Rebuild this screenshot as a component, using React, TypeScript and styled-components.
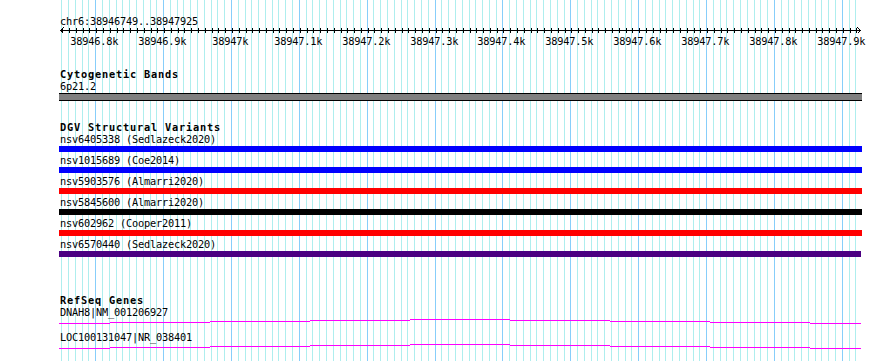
import styled, { createGlobalStyle } from "styled-components";

const START = 38946749;
const END = 38947925;
const ORIGIN_BP = 38946800;
const ORIGIN_X = 95.7;
const PX_PER_BP = 0.67875;
const VIEW_LEFT = 59;
const VIEW_WIDTH = 803;

const toX = (bp: number) =>
  Math.floor(ORIGIN_X + (bp - ORIGIN_BP) * PX_PER_BP) - VIEW_LEFT;

const gridBps: number[] = [];
for (let bp = 38946750; bp <= 38947920; bp += 10) gridBps.push(bp);

const majorBps = gridBps.filter(bp => bp % 100 === 0);

const formatTick = (bp: number) =>
  `${(bp / 1000).toFixed(bp % 1000 === 0 ? 0 : 1)}k`;

const variants = [
  { name: "nsv6405338", study: "Sedlazeck2020", color: "#0000ff", end: 803 },
  { name: "nsv1015689", study: "Coe2014", color: "#0000ff", end: 803 },
  { name: "nsv5903576", study: "Almarri2020", color: "#ff0000", end: 803 },
  { name: "nsv5845600", study: "Almarri2020", color: "#000000", end: 803 },
  { name: "nsv602962", study: "Cooper2011", color: "#ff0000", end: 803 },
  { name: "nsv6570440", study: "Sedlazeck2020", color: "#4b0082", end: 802 },
];

const genes = ["DNAH8|NM_001206927", "LOC100131047|NR_038401"];

// wavy step profile of the gene line, in view coords
const geneSteps = [
  { x1: 0, x2: 51, y: 5 },
  { x1: 51, x2: 151, y: 4 },
  { x1: 151, x2: 251, y: 3 },
  { x1: 251, x2: 351, y: 2 },
  { x1: 351, x2: 451, y: 1 },
  { x1: 451, x2: 551, y: 2 },
  { x1: 551, x2: 651, y: 3 },
  { x1: 651, x2: 751, y: 4 },
  { x1: 751, x2: 802, y: 5 },
];

const GlobalStyle = createGlobalStyle`
  html, body {
    margin: 0;
    padding: 0;
    background: #ffffff;
  }
  body {
    font-family: "DejaVu Sans Mono", "Liberation Mono", monospace;
    color: #000000;
  }
`;

export default function App() {
  return (
    <>
      <GlobalStyle />
      <View>
        <Grid width={VIEW_WIDTH} height={361}>
          {gridBps.map(bp => (
            <rect
              key={bp}
              x={toX(bp)}
              y={0}
              width={1}
              height={361}
              fill={bp % 100 === 0 ? "#87cefa" : "#aeeeee"}
            />
          ))}
        </Grid>

        <Content>
          <RulerLabel>
            chr6:{START}..{END}
          </RulerLabel>
          <Axis width={VIEW_WIDTH} height={8}>
            <rect x={1} y={3} width={800} height={1} fill="#000" />
            {gridBps.map(bp => (
              <rect key={bp} x={toX(bp) + 1} y={1} width={1} height={5} fill="#000" />
            ))}
            <polyline points="4.5,0.5 1.5,3.5 4.5,6.5" fill="none" stroke="#000" />
            <polyline points="798.5,0.5 801.5,3.5 798.5,6.5" fill="none" stroke="#000" />
          </Axis>
          <TickRow>
            {majorBps.map(bp => (
              <TickLabel key={bp} style={{ left: toX(bp) - 0.8 }}>
                {formatTick(bp)}
              </TickLabel>
            ))}
          </TickRow>

          <TrackTitle $top={21}>Cytogenetic Bands</TrackTitle>
          <FeatureLabel>6p21.2</FeatureLabel>
          <Band />

          <TrackTitle $top={20}>DGV Structural Variants</TrackTitle>
          {variants.map(v => (
            <VariantRow key={v.name}>
              <FeatureLabel>
                {v.name} ({v.study})
              </FeatureLabel>
              <Bar $color={v.color} $width={v.end} />
            </VariantRow>
          ))}

          <TrackTitle $top={35}>RefSeq Genes</TrackTitle>
          {genes.map(g => (
            <GeneRow key={g}>
              <FeatureLabel>{g}</FeatureLabel>
              <GeneLine width={VIEW_WIDTH} height={13}>
                {geneSteps.map(s => (
                  <rect
                    key={s.x1}
                    x={s.x1}
                    y={s.y}
                    width={s.x2 - s.x1}
                    height={1}
                    fill="#ff00ff"
                  />
                ))}
              </GeneLine>
            </GeneRow>
          ))}
        </Content>
      </View>
    </>
  );
}

const View = styled.div`
  position: relative;
  margin-left: ${VIEW_LEFT}px;
  width: ${VIEW_WIDTH}px;
  height: 361px;
`;

const Grid = styled.svg`
  position: absolute;
  left: 0;
  top: 0;
  shape-rendering: crispEdges;
`;

const Content = styled.div`
  position: relative;
  display: flex;
  flex-direction: column;
`;

const Text = styled.div`
  font-size: 10.3px;
  line-height: 12px;
  letter-spacing: -0.2px;
  white-space: nowrap;
`;

const RulerLabel = styled(Text)`
  margin-top: 15px;
  padding-left: 1px;
`;

const Axis = styled.svg`
  display: block;
  shape-rendering: crispEdges;
`;

const TickRow = styled.div`
  position: relative;
  height: 12px;
`;

const TickLabel = styled.span`
  position: absolute;
  top: 0;
  transform: translateX(-50%);
  font-size: 10.3px;
  line-height: 12px;
  letter-spacing: -0.2px;
  white-space: nowrap;
`;

const TrackTitle = styled(Text)<{ $top: number }>`
  margin-top: ${p => p.$top}px;
  padding-left: 1px;
  font-weight: bold;
  letter-spacing: 0.8px;
`;

const FeatureLabel = styled(Text)`
  padding-left: 1px;
`;

const Band = styled.div`
  margin-top: 1px;
  width: ${VIEW_WIDTH}px;
  height: 6px;
  background: #808080;
  border-top: 1px solid #000;
  border-bottom: 1px solid #000;
`;

const VariantRow = styled.div`
  display: flex;
  flex-direction: column;
  padding-bottom: 2px;
`;

const Bar = styled.div<{ $color: string; $width: number }>`
  margin-top: 1px;
  width: ${p => p.$width}px;
  height: 6px;
  background: ${p => p.$color};
`;

const GeneRow = styled.div`
  display: flex;
  flex-direction: column;
`;

const GeneLine = styled.svg`
  display: block;
  shape-rendering: crispEdges;
`;
